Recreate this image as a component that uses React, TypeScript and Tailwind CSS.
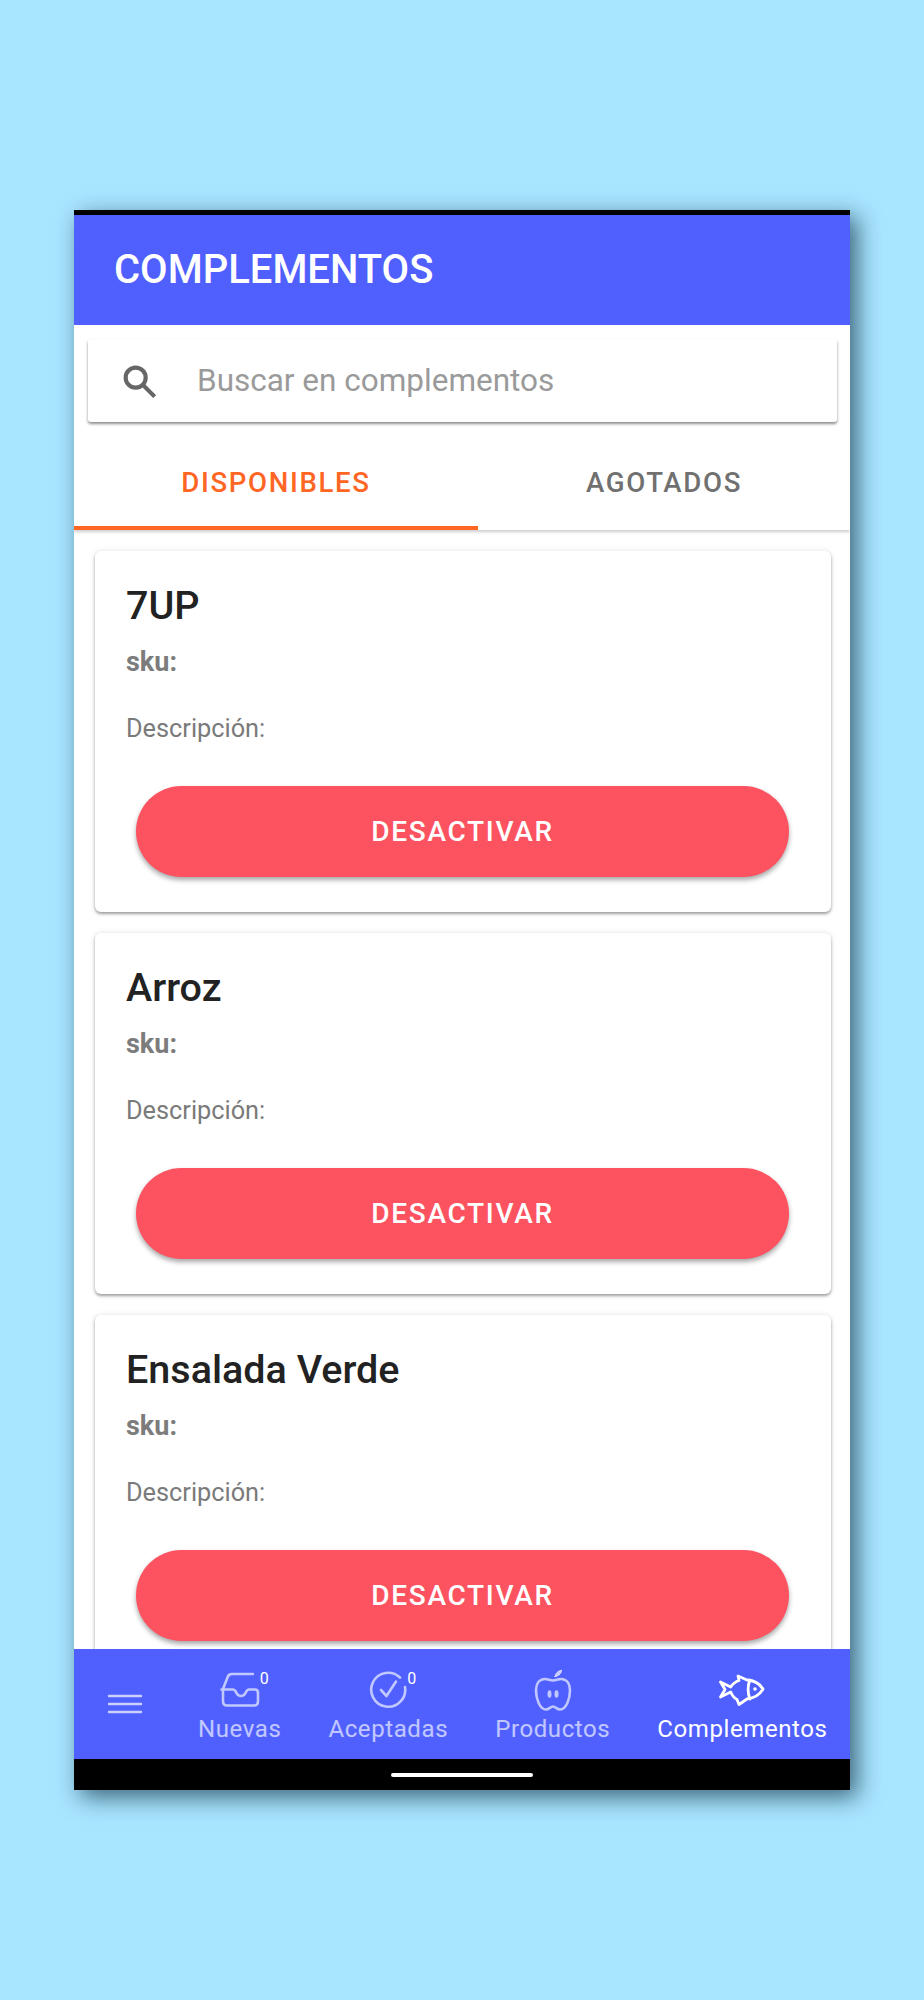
import React from 'react';

const products = ['7UP', 'Arroz', 'Ensalada Verde'];

const InboxIcon = () => (
    <svg width="40" height="36" viewBox="0 0 40 36" fill="none" stroke="currentColor" strokeWidth="2.600" strokeLinecap="round" strokeLinejoin="round">
        <path d="M33 2H12C9.500 2 8 3.500 7.500 5.500L3 17V29C3 32 4.500 33.500 7 33.500H34C36.500 33.500 38 32 38 29V21C38 18.500 37 17.500 35 17.500H29C27 17.500 26.500 19 25.500 21C24.500 23 23.500 24 21 24C18.500 24 17.500 23 16.500 21C15.500 19 15 17.500 13 17.500H1.500" />
    </svg>
);

const CheckCircleIcon = () => (
    <svg width="38" height="38" viewBox="0 0 38 38" fill="none" stroke="currentColor" strokeWidth="2.600" strokeLinecap="round" strokeLinejoin="round">
        <path d="M31 6.500A17 17 0 1 0 36 16" />
        <path d="M12 19L17.500 25L27 10.500" />
    </svg>
);

const AppleIcon = () => (
    <svg width="38" height="42" viewBox="0 0 38 42" fill="none" stroke="currentColor" strokeWidth="2.600" strokeLinecap="round" strokeLinejoin="round">
        <path d="M11 10C5 10 2 15 2 21.500C2 30 6 40.500 12 40.500C15 40.500 16.500 37.500 19 37.500C21.500 37.500 23 40.500 26 40.500C32 40.500 36 30 36 21.500C36 15 33 10 27 10C24 10 22 11.500 19 11.500C16 11.500 14 10 11 10Z" />
        <path d="M21 7.500C21.500 4 24 2 27.500 1.200C27.300 4.500 25 7 21 7.500Z" fill="currentColor" strokeWidth="1" />
        <ellipse cx="15.500" cy="25" rx="2" ry="3.800" fill="currentColor" stroke="none" />
        <ellipse cx="22.500" cy="25" rx="2" ry="3.800" fill="currentColor" stroke="none" />
    </svg>
);

const FishIcon = () => (
    <svg width="46" height="32" viewBox="0 0 46 32" fill="none" stroke="currentColor" strokeWidth="2.800" strokeLinecap="round" strokeLinejoin="round">
        <path d="M1.500 8L11.700 13C13.500 10 16 8 20 6.500L19 2L28 6C36 6.500 41 10 44 15C41 20.500 36 24 28 25L20 30.500L18 25.500C15 24 13 21 11.700 18L1.500 23L6 15.500Z" />
        <path d="M31 6C28.500 11 28.500 20 31 25" />
        <circle cx="36" cy="15" r="1.800" fill="currentColor" stroke="none" />
    </svg>
);

const NavItem = ({ label, icon, count, active }: { label: string; icon: React.ReactNode; count?: number; active?: boolean }) => (
    <div className={`flex flex-col items-center ${active ? 'text-white' : 'text-white/65'}`}>
        <div className="relative flex h-[44px] items-center">
            {icon}
            {count !== undefined && (
                <span className="absolute left-full top-[3px] text-[16px] leading-4 text-white">{count}</span>
            )}
        </div>
        <span className="mt-[3px] text-[24px] leading-7 tracking-[0.6px]">{label}</span>
    </div>
);

const ProductCard = ({ name }: { name: string }) => (
    <div className="ml-[21px] mr-[19px] mb-[21px] h-[361px] shrink-0 rounded-[6px] bg-white pl-[31px] pt-[33px] shadow-[0_2px_3px_rgba(0,0,0,0.35),0_0_6px_rgba(0,0,0,0.1)]">
        <h2 className="text-[39.5px] font-medium leading-[44px] text-[#222222]">{name}</h2>
        <p className="mt-[18px] text-[27px] font-bold leading-8 text-[#7c7c7c]">sku:</p>
        <p className="mt-[37px] text-[25.300px] leading-7 text-[#7a7a7a]">Descripción:</p>
        <button className="ml-[10px] mt-[43px] flex h-[91px] w-[653px] items-center justify-center rounded-full bg-[#fd5361] text-[28px] font-medium tracking-[1.7px] text-white shadow-[0_3px_5px_rgba(0,0,0,0.35)]">
            DESACTIVAR
        </button>
    </div>
);

export default function App() {
    return (
        <div className="h-[2000px] bg-[#a8e5ff] pt-[210px] pl-[74px]" style={{ fontFamily: 'Roboto, sans-serif' }}>
            <div className="flex h-[1580px] w-[776px] flex-col overflow-hidden border-t-[5px] border-black bg-white shadow-[7px_7px_22px_rgba(0,30,50,0.65)]">
                <header className="flex h-[110px] shrink-0 items-center bg-[#4f60ff] pl-[40px]">
                    <h1 className="text-[40px] font-medium text-white">COMPLEMENTOS</h1>
                </header>

                <div className="ml-[14px] mr-[13px] mt-[14px] flex h-[83px] shrink-0 items-center rounded-[3px] bg-white shadow-[0_2px_3px_rgba(0,0,0,0.45)]">
                    <svg className="ml-[31px]" width="40" height="40" viewBox="0 0 24 24" fill="none" stroke="#666666" strokeWidth="2.500" strokeLinecap="square">
                        <circle cx="10" cy="10" r="6" />
                        <path d="M15 15L20.500 20.500" />
                    </svg>
                    <span className="ml-[38px] text-[31.500px] text-[#9a9a9a]">Buscar en complementos</span>
                </div>

                <div className="flex h-[108px] shrink-0 shadow-[0_2px_3px_rgba(0,0,0,0.2)]">
                    <div className="flex w-[404px] items-center justify-center border-b-4 border-[#ff6624] pt-[17px] text-[27.600px] font-medium tracking-[1.650px] text-[#ff6624]">
                        DISPONIBLES
                    </div>
                    <div className="flex flex-1 items-center justify-center pt-[13px] text-[27.600px] font-medium tracking-[1.650px] text-[#707070]">
                        AGOTADOS
                    </div>
                </div>

                <main className="flex min-h-0 flex-1 flex-col overflow-hidden pt-[21px]">
                    {products.map((name) => (
                        <ProductCard key={name} name={name} />
                    ))}
                </main>

                <nav className="flex h-[110px] shrink-0 items-center gap-[47px] bg-[#4f60ff] pl-[33px] pt-[2px]">
                    <svg className="mb-[2px] mr-[8px]" width="36" height="24" viewBox="0 0 36 24" stroke="#ffffff" strokeOpacity="0.7" strokeWidth="2.400" strokeLinecap="round">
                        <path d="M2 4H34M2 12H34M2 20H34" />
                    </svg>
                    <NavItem label="Nuevas" icon={<InboxIcon />} count={0} />
                    <NavItem label="Aceptadas" icon={<CheckCircleIcon />} count={0} />
                    <NavItem label="Productos" icon={<AppleIcon />} />
                    <NavItem label="Complementos" icon={<FishIcon />} active />
                </nav>

                <div className="flex h-[31px] shrink-0 items-center justify-center bg-black">
                    <div className="h-[4px] w-[142px] rounded-full bg-white" />
                </div>
            </div>
        </div>
    );
}
